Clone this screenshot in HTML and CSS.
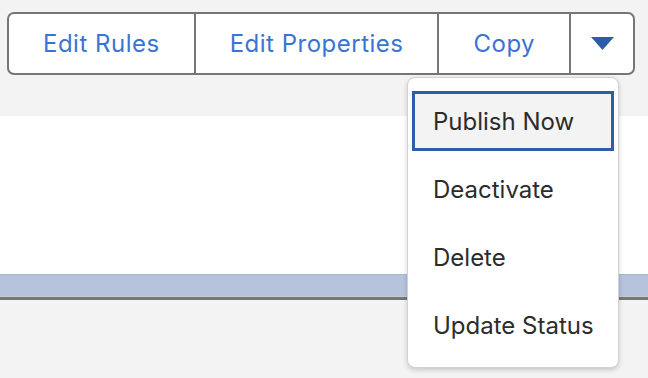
FILE: index.html
```html
<!DOCTYPE html>
<html lang="en">
<head>
  <meta charset="UTF-8" />
  <title>Rule Actions</title>
  <link rel="stylesheet" href="styles.css">
</head>
<body>
<div class="header">
  <div class="btn-group">
    <button class="btn">Edit Rules</button>
    <button class="btn">Edit Properties</button>
    <button class="btn">Copy</button>
    <button class="btn btn-more" aria-label="More actions">
      <svg width="23" height="13" viewBox="0 0 23 13"><polygon points="0,0 23,0 11.5,13" fill="#2d5cab" /></svg>
    </button>

    <!-- dropdown opened from the last button -->
    <div class="menu">
      <div class="menu-item focused">Publish Now</div>
      <div class="menu-item">Deactivate</div>
      <div class="menu-item">Delete</div>
      <div class="menu-item">Update Status</div>
    </div>
  </div>
</div>

<div class="panel"></div>
<div class="band"></div>

</body>
</html>
```

FILE: styles.css
```css
body {
  margin: 0;
  background: #f3f3f3;
  font-family: Inter, "Liberation Sans", sans-serif;
  height: 378px;
  overflow: hidden;
}

.header {
  padding: 12px 13px 0 7px;
}

.btn-group {
  display: flex;
  position: relative;
  height: 63px;
  box-sizing: border-box;
  border: 2px solid #767676;
  border-radius: 7px;
  background: white;
}

.btn {
  background: transparent;
  border: none;
  border-left: 2px solid #767676;
  padding: 0 34px;
  font-family: inherit;
  font-size: 24px;
  letter-spacing: 0.5px;
  color: #3a74d3;
  cursor: pointer;
}

.btn:first-child {
  border-left: none;
  border-radius: 5px 0 0 5px;
}

.btn-more {
  flex: 1;
  padding: 0;
  display: flex;
  justify-content: center;
  align-items: center;
}

.menu {
  position: absolute;
  top: calc(100% + 4px);
  right: 14px;
  width: 212px;
  box-sizing: border-box;
  padding: 13px 4px 12px;
  background: white;
  border: 1px solid #d2d2d2;
  border-radius: 8px;
  box-shadow: 0 2px 5px rgba(0, 0, 0, 0.18);
  display: flex;
  flex-direction: column;
  gap: 8px;
  z-index: 10;
}

.menu-item {
  height: 60px;
  box-sizing: border-box;
  border: 3px solid transparent;
  padding-left: 18px;
  display: flex;
  align-items: center;
  font-size: 24px;
  color: #2c2c2c;
  cursor: pointer;
}

.menu-item.focused {
  border-color: #2e5ea9;
  background: #f3f3f3;
}

.panel {
  margin-top: 41px;
  height: 158px;
  background: white;
}

.band {
  height: 23px;
  box-sizing: border-box;
  background: #b5c3dc;
  border-top: 1px solid #a9b8d2;
  border-bottom: 1px solid #cacaca;
  box-shadow: 0 3px 0 #777;
}
```
